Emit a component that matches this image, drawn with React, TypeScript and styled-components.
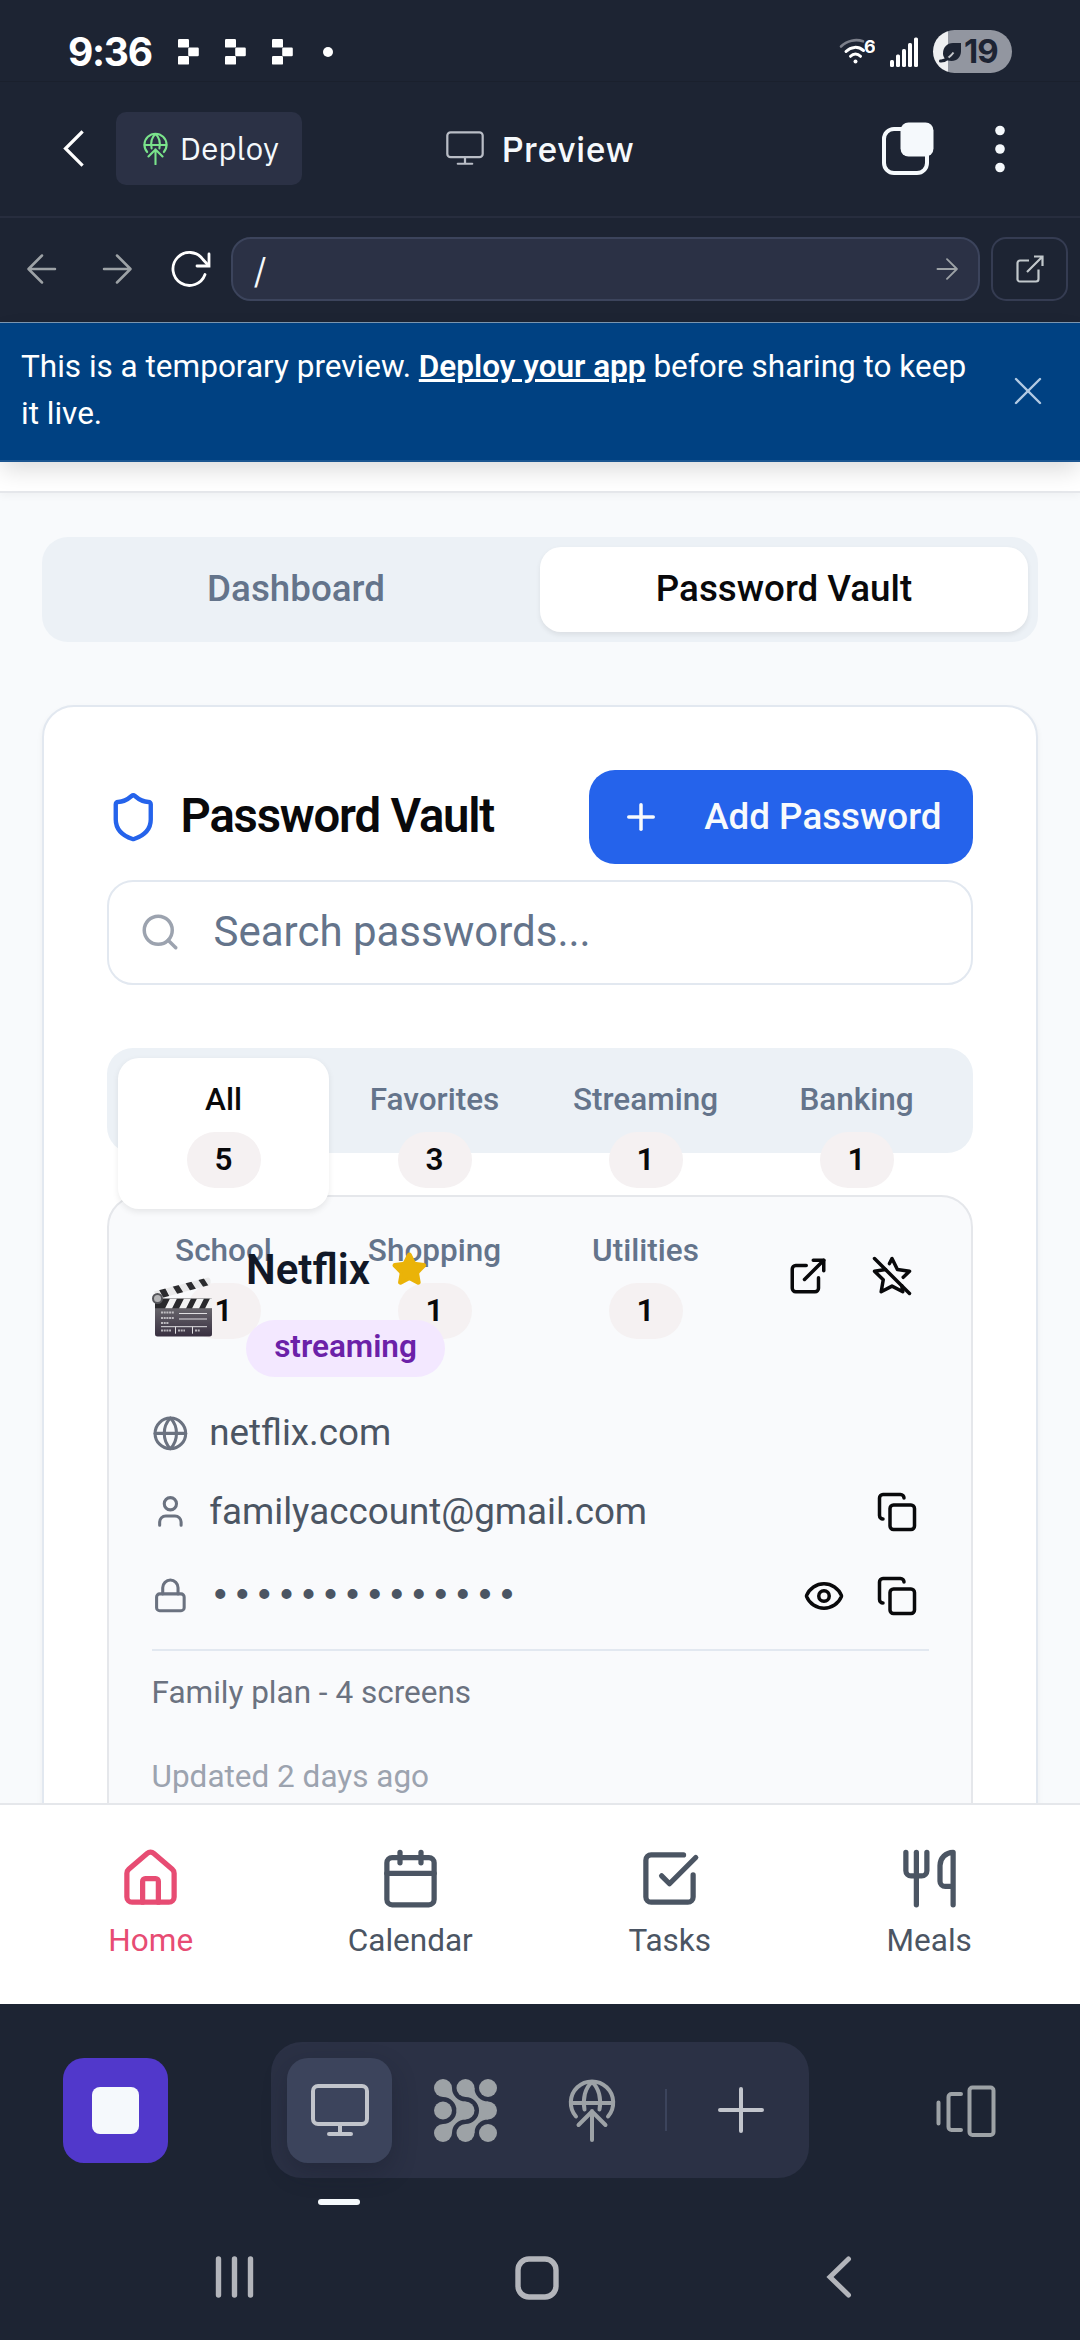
import React from "react";
import styled, { createGlobalStyle } from "styled-components";
import {
  Calendar,
  Copy,
  ExternalLink,
  Eye,
  Globe,
  House,
  Lock,
  Plus,
  Search,
  Shield,
  SquareCheckBig,
  Star,
  StarOff,
  User,
  Utensils,
  X,
} from "lucide-react";

const GlobalStyle = createGlobalStyle`
  *, *::before, *::after { box-sizing: border-box; }
  body { margin: 0; background: #1d2433; }
  svg { display: block; flex: none; }
  button { font: inherit; border: 0; padding: 0; margin: 0; background: none; color: inherit; }
`;

const Screen = styled.div`
  width: 1080px;
  height: 2340px;
  display: flex;
  flex-direction: column;
  overflow: hidden;
  background: #1d2433;
  font-family: Roboto, "Liberation Sans", sans-serif;
`;

/* ---------- system status bar ---------- */

const StatusBar = styled.div`
  height: 82px;
  flex: none;
  display: flex;
  align-items: center;
  justify-content: space-between;
  padding: 22px 68px 0 68px;
  border-bottom: 1px solid #1a202d;
`;

const StatusGroup = styled.div<{ $gap: number }>`
  display: flex;
  align-items: center;
  gap: ${(p) => p.$gap}px;
`;

const Clock = styled.span`
  width: 83px;
  margin-right: 1px;
  color: #fff;
  font: 700 39px/44px Inter, sans-serif;
  letter-spacing: -1.3px;
  white-space: nowrap;
`;

const Battery = styled.div`
  width: 79px;
  height: 43px;
  border-radius: 22px;
  background: linear-gradient(90deg, #eeeff1 0 15px, #9296a0 15px);
  display: flex;
  align-items: center;
  padding-left: 6px;
  color: #1d2433;
  font: 700 33px/43px Inter, sans-serif;
  letter-spacing: -1px;
`;

const BatteryLevel = styled.span`
  margin-left: 2px;
`;

/* ---------- workspace header ---------- */

const Header = styled.header`
  height: 136px;
  flex: none;
  display: grid;
  grid-template-columns: 1fr auto 1fr;
  align-items: center;
  padding: 0 74px 1px 62px;
  border-bottom: 2px solid #272d3e;
  color: #f5f9fc;
`;

const HeaderSide = styled.div<{ $end?: boolean }>`
  display: flex;
  align-items: center;
  justify-content: ${(p) => (p.$end ? "flex-end" : "flex-start")};
  gap: ${(p) => (p.$end ? 60 : 32)}px;
`;

const DeployButton = styled.button`
  height: 73px;
  width: 186px;
  border-radius: 10px;
  background: #2b3145;
  display: flex;
  align-items: center;
  gap: 12px;
  padding-left: 27px;
  color: #f5f9fc;
  font: 400 31px/40px "IBM Plex Sans", Inter, sans-serif;
  letter-spacing: 0.35px;
`;

const HeaderTitle = styled.div`
  display: flex;
  align-items: center;
  gap: 18px;
  transform: translateX(6px);
  font: 500 35px/44px "IBM Plex Sans", Inter, sans-serif;
  letter-spacing: 0.65px;
`;

/* ---------- address row ---------- */

const AddressRow = styled.div`
  height: 105px;
  flex: none;
  display: flex;
  align-items: center;
  padding: 0 12px 3px 27px;
  border-bottom: 1px solid #7d98b3;
`;

const NavButtons = styled.div`
  width: 204px;
  display: flex;
  align-items: center;
  color: #9da2a6;
`;

const NavSlot = styled.div<{ $w: number }>`
  width: ${(p) => p.$w}px;
`;

const AddressField = styled.div`
  width: 749px;
  height: 64px;
  border: 2px solid #3c445c;
  border-radius: 20px;
  background: #2b3145;
  display: flex;
  align-items: center;
  justify-content: space-between;
  padding: 0 20px;
  color: #9da2a6;
  font: 400 34px/60px "IBM Plex Sans", Inter, sans-serif;
`;

const AddressPath = styled.span`
  margin-left: 1px;
  color: #f5f9fc;
`;

const OpenButton = styled.button`
  width: 77px;
  height: 64px;
  margin-left: 11px;
  border: 2px solid #353c52;
  border-radius: 15px;
  display: flex;
  align-items: center;
  justify-content: center;
  color: #c2c8cc;
`;

/* ---------- preview notice ---------- */

const Notice = styled.div`
  position: relative;
  z-index: 3;
  height: 139px;
  flex: none;
  display: flex;
  align-items: center;
  justify-content: space-between;
  padding: 0 28px 2px 21px;
  background: #004182;
  border-bottom: 2px solid #1b5590;
  box-shadow: 0 10px 22px -2px rgba(0, 0, 0, 0.14);
  color: #fff;
`;

const NoticeText = styled.p`
  margin: 0;
  width: 970px;
  font-size: 31.5px;
  line-height: 46.5px;
`;

const NoticeLink = styled.a`
  font-weight: 600;
  text-decoration: underline;
`;

/* ---------- previewed application ---------- */

const AppView = styled.main`
  height: 1341px;
  flex: none;
  overflow: hidden;
  background: #f8fafc;
`;

const AppHeaderEdge = styled.div`
  height: 31px;
  background: #fff;
  border-bottom: 2px solid #e5e7eb;
  box-shadow: 0 3px 8px rgba(0, 0, 0, 0.04);
`;

const Body = styled.div`
  padding: 44px 42px 0;
  display: flex;
  flex-direction: column;
`;

const Segments = styled.div`
  height: 105px;
  padding: 10px;
  border-radius: 26px;
  background: #ecf1f6;
  display: grid;
  grid-template-columns: 1fr 1fr;
`;

const Segment = styled.button<{ $active?: boolean }>`
  border-radius: 21px;
  background: ${(p) => (p.$active ? "#fff" : "transparent")};
  color: ${(p) => (p.$active ? "#09090b" : "#64748b")};
  box-shadow: ${(p) => (p.$active ? "0 2.6px 5px rgba(0,0,0,0.07)" : "none")};
  font-weight: 500;
  font-size: 36.75px;
  line-height: 52.5px;
`;

const Panel = styled.section`
  margin-top: 63px;
  height: 1300px;
  border: 2px solid #e2e8f0;
  border-radius: 32px;
  background: #fff;
  box-shadow: 0 3px 6px rgba(0, 0, 0, 0.05);
  padding: 63px 63px 0;
  display: flex;
  flex-direction: column;
`;

const PanelHeader = styled.div`
  height: 94px;
  flex: none;
  display: flex;
  align-items: center;
  justify-content: space-between;
`;

const PanelTitle = styled.h2`
  margin: 0;
  display: flex;
  align-items: center;
  gap: 21px;
  color: #09090b;
  font-weight: 600;
  font-size: 47.25px;
  line-height: 50px;
  letter-spacing: -1.18px;
`;

const AddButton = styled.button`
  height: 94px;
  padding: 0 31.5px;
  border-radius: 26px;
  background: #2563eb;
  color: #f8fafc;
  display: flex;
  align-items: center;
  gap: 42px;
  font-weight: 500;
  font-size: 36.75px;
`;

const Label = styled.span`
  padding-bottom: 2px;
`;

const SearchField = styled.div`
  height: 105px;
  flex: none;
  margin-top: 16px;
  border: 2px solid #e2e8f0;
  border-radius: 26px;
  background: #fff;
  display: flex;
  align-items: center;
  gap: 32.5px;
  padding: 0 0 2px 30px;
  color: #64748b;
  font-size: 42px;
`;

const Categories = styled.div`
  position: relative;
  z-index: 1;
  height: 105px;
  flex: none;
  margin-top: 63px;
  padding: 10px 11px;
  border-radius: 26px;
  background: #ecf1f6;
  display: grid;
  grid-template-columns: repeat(4, 1fr);
  grid-auto-rows: 151px;
`;

const Category = styled.button<{ $active?: boolean }>`
  display: flex;
  flex-direction: column;
  align-items: center;
  gap: 11px;
  padding-top: 21px;
  border-radius: 21px;
  background: ${(p) => (p.$active ? "#fff" : "transparent")};
  color: ${(p) => (p.$active ? "#09090b" : "#64748b")};
  box-shadow: ${(p) => (p.$active ? "0 2.6px 6px rgba(0,0,0,0.08)" : "none")};
  font-weight: 500;
  font-size: 31.5px;
  line-height: 42px;
`;

const Count = styled.span`
  width: 74px;
  height: 56px;
  border-radius: 28px;
  background: #f5f1f2;
  color: #09090b;
  font-weight: 600;
  line-height: 55px;
`;

const Entry = styled.article`
  height: 700px;
  flex: none;
  margin-top: 42px;
  border: 2px solid #e5e7eb;
  border-radius: 32px;
  background: #f9fafc;
  padding: 42.5px;
`;

const EntryBody = styled.div`
  position: relative;
  z-index: 2;
  display: flex;
  flex-direction: column;
`;

const EntryHead = styled.div`
  height: 137px;
  display: flex;
  align-items: center;
`;

const EntryEmoji = styled.div`
  width: 94.5px;
  height: 62px;
`;

const EntryTitle = styled.div`
  flex: 1;
  height: 137px;
  display: flex;
  flex-direction: column;
  align-items: flex-start;
  justify-content: space-between;
`;

const EntryName = styled.h3`
  margin: 0;
  display: flex;
  align-items: center;
  gap: 21px;
  color: #111827;
  font-weight: 600;
  font-size: 42px;
  line-height: 60px;
`;

const Tag = styled.span`
  height: 57px;
  width: 199px;
  border-radius: 28.5px;
  background: #f3e8ff;
  color: #6b21a8;
  text-align: center;
  font-weight: 600;
  font-size: 31.5px;
  line-height: 54px;
`;

const Actions = styled.div<{ $top?: boolean }>`
  display: flex;
  gap: 10.5px;
  color: #09090b;
  align-self: ${(p) => (p.$top ? "flex-start" : "center")};
`;

const IconButton = styled.button<{ $w: number }>`
  width: ${(p) => p.$w}px;
  height: 73.5px;
  display: flex;
  align-items: center;
  justify-content: center;
`;

const Field = styled.div<{ $h: number; $mt: number }>`
  height: ${(p) => p.$h}px;
  margin-top: ${(p) => p.$mt}px;
  display: flex;
  align-items: center;
  color: #6b7280;
`;

const FieldValue = styled.span<{ $mono?: boolean }>`
  flex: 1;
  margin-left: 21px;
  color: #4b5563;
  font-family: ${(p) => (p.$mono ? '"Liberation Mono", monospace' : "inherit")};
  font-size: 36.75px;
  line-height: 50px;
`;

const Note = styled.p`
  margin: 16.5px 0 0;
  padding-top: 21px;
  border-top: 2px solid #e2e8f0;
  color: #6b7280;
  font-size: 31.5px;
  line-height: 42px;
`;

const Updated = styled.p`
  margin: 42px 0 0;
  color: #9ca3af;
  font-size: 31.5px;
  line-height: 42px;
`;

/* ---------- application tab bar ---------- */

const TabBar = styled.nav`
  height: 201px;
  flex: none;
  padding: 42px 21px 0;
  border-top: 2px solid #e5e7eb;
  background: #fff;
  display: grid;
  grid-template-columns: repeat(4, 1fr);
`;

const TabItem = styled.button<{ $active?: boolean }>`
  display: flex;
  flex-direction: column;
  align-items: center;
  justify-content: flex-start;
  gap: 10px;
  color: ${(p) => (p.$active ? "#e74c73" : "#4b5563")};
  font-size: 31.5px;
  line-height: 42px;
`;

/* ---------- workspace dock ---------- */

const Dock = styled.div`
  height: 195px;
  flex: none;
  display: flex;
  align-items: flex-start;
  padding: 38px 84px 0 63px;
`;

const StopButton = styled.button`
  width: 105px;
  height: 105px;
  margin: 16px 103px 0 0;
  border-radius: 21px;
  background: #5138cb;
  display: flex;
  align-items: center;
  justify-content: center;
`;

const StopMark = styled.span`
  width: 47px;
  height: 47px;
  border-radius: 8px;
  background: #f5f9fc;
`;

const DockColumn = styled.div`
  display: flex;
  flex-direction: column;
`;

const DockGroup = styled.div`
  width: 538px;
  height: 136px;
  border-radius: 31px;
  background: #2b3145;
  display: flex;
  align-items: center;
  padding-left: 16px;
`;

const DockItem = styled.button<{ $active?: boolean; $ml?: number }>`
  width: 105px;
  height: 105px;
  margin-left: ${(p) => p.$ml ?? 0}px;
  border-radius: 21px;
  display: flex;
  align-items: center;
  justify-content: center;
  color: ${(p) => (p.$active ? "#c2c5cc" : "#9da2a6")};
  background: ${(p) => (p.$active ? "#3c445c" : "transparent")};
  box-shadow: ${(p) => (p.$active ? "0 10px 24px rgba(20,24,36,0.3)" : "none")};
`;

const DockDivider = styled.span`
  width: 2px;
  height: 42px;
  margin-left: 21px;
  background: #3c445c;
`;

const Indicator = styled.span`
  width: 42px;
  height: 6px;
  margin: 21px 0 0 47px;
  border-radius: 3px;
  background: #f5f9fc;
`;

const LayoutButton = styled.button`
  margin: 42.5px 0 0 auto;
  color: #9da2a6;
`;

/* ---------- system navigation ---------- */

const SystemNav = styled.div`
  flex: 1;
  display: flex;
  align-items: flex-start;
  justify-content: space-between;
  padding: 57px 228px 0 215px;
  color: #b3b5bb;

  svg:nth-child(2) {
    margin-right: 6px;
  }
`;

/* ---------- drawings ---------- */

const Tiles = () => (
  <svg width="21" height="26" viewBox="0 0 21 26" fill="#fff">
    <rect x="0" y="0" width="11" height="8.6" rx="1.2" />
    <rect x="10.2" y="8.6" width="10.6" height="8.6" rx="1.2" />
    <rect x="0" y="17" width="11" height="8.6" rx="1.2" />
  </svg>
);

const Dot = styled.span`
  width: 10px;
  height: 10px;
  margin-left: 4px;
  border-radius: 50%;
  background: #fff;
`;

const Wifi = () => (
  <svg width="36" height="30" viewBox="0 0 36 30" fill="none" strokeLinecap="round">
    <path d="M2 9.500C8 3.400 17 1.800 24 4.300" stroke="#7b7f8a" strokeWidth="2.600" />
    <path d="M7 14.500c5-5 12-5.600 17.500-1" stroke="#fff" strokeWidth="3" />
    <path d="M11.500 19.300c3-3 7-3 10 0" stroke="#fff" strokeWidth="3" />
    <circle cx="16.500" cy="24.500" r="2" fill="#fff" />
    <text x="25" y="16" fill="#fff" fontFamily="Inter, sans-serif" fontWeight="700" fontSize="18">
      6
    </text>
  </svg>
);

const Signal = () => (
  <svg width="28" height="30" viewBox="0 0 28 30" fill="#fff">
    <rect x="0" y="23" width="4" height="7" rx="1.5" />
    <rect x="6" y="17.500" width="4" height="12.500" rx="1.5" />
    <rect x="12" y="12" width="4" height="18" rx="1.5" />
    <rect x="18" y="6" width="4" height="24" rx="1.5" />
    <rect x="24" y="0.500" width="4" height="29.500" rx="1.5" />
  </svg>
);

const Leaf = () => (
  <svg width="23" height="22" viewBox="0 0 23 22">
    <path d="M22 2v8c0 6-4 10-9.500 10C7 20 4 16.500 4 12.500 4 6.500 8 2 14 2z" fill="#1d2433" />
    <path d="M5 19c4-1.500 7-4 9.500-7.500" stroke="#c5c7cc" strokeWidth="2" fill="none" />
    <path d="M1.500 20c3 .2 5-.8 7-2.500" stroke="#1d2433" strokeWidth="3" strokeLinecap="round" fill="none" />
  </svg>
);

const BackChevron = () => (
  <svg width="22" height="37" viewBox="0 0 22 37" fill="none" stroke="#fff" strokeWidth="3.2" strokeLinecap="square">
    <path d="M19.500 2.500 3.500 18.500l16 16" />
  </svg>
);

const Launch = ({ size, color }: { size: number; color: string }) => (
  <svg
    width={size}
    height={(size * 64) / 48}
    viewBox="0 0 48 64"
    fill="none"
    stroke={color}
    strokeWidth="4"
    strokeLinecap="round"
    strokeLinejoin="round"
  >
    <path d="M8 38.500a21.200 21.200 0 1 1 32 0" />
    <path d="M3 25h42" />
    <path d="M24 4c-7 6-9.500 17-7.500 27.500M24 4c7 6 9.500 17 7.500 27.500" />
    <path d="M24 62V33M10.500 47 24 33.500 37.500 47" />
  </svg>
);

const Monitor = ({ w, stroke }: { w: number; stroke: number }) => (
  <svg
    width={w}
    height={(w * 52) / 58}
    viewBox="0 0 58 52"
    fill="none"
    stroke="currentColor"
    strokeWidth={stroke}
    strokeLinecap="round"
  >
    <rect x="2" y="2" width="54" height="38" rx="5" />
    <path d="M29 40v10M18 50h22" />
  </svg>
);

const TitleGlyph = styled.span`
  color: #b9bdc6;
`;

const Windows = () => (
  <svg width="52" height="54" viewBox="0 0 52 54">
    <rect x="2" y="7" width="43" height="44" rx="10" fill="none" stroke="#f5f9fc" strokeWidth="4" />
    <rect x="18.500" y="0.500" width="33" height="34" rx="8" fill="#f5f9fc" />
  </svg>
);

const Kebab = () => (
  <svg width="12" height="48" viewBox="0 0 12 48" fill="#f5f9fc">
    <circle cx="6" cy="5.500" r="4.800" />
    <circle cx="6" cy="24" r="4.800" />
    <circle cx="6" cy="42.500" r="4.800" />
  </svg>
);

const Arrow = ({ size, flip }: { size: number; flip?: boolean }) => (
  <svg
    width={size}
    height={size}
    viewBox="0 0 30 30"
    fill="none"
    stroke="currentColor"
    strokeWidth="2.500"
    strokeLinecap="round"
    strokeLinejoin="round"
  >
    <path d={flip ? "M28 15H2M15 1.500 1.500 15 15 28.500" : "M2 15h26M15 1.500 28.500 15 15 28.500"} />
  </svg>
);

const Reload = () => (
  <svg width="40" height="38" viewBox="0 0 40 38" fill="none" stroke="#fff" strokeWidth="2.800" strokeLinecap="round">
    <path d="M34 24.500A16.500 16.500 0 1 1 32 9.500L37.500 15.500" />
    <path d="M38 4v12H26" />
  </svg>
);

const Share = () => (
  <svg width="28" height="28" viewBox="0 0 28 28" fill="none" stroke="currentColor" strokeWidth="2.200">
    <path d="M13 5.500H4a2.500 2.500 0 0 0-2.500 2.500v15.500A2.500 2.500 0 0 0 4 26.500h16a2.500 2.500 0 0 0 2.500-2.500V14.500" />
    <path d="M18 1.500h8.500V11M26.500 1.500 11 17" />
  </svg>
);

const Agent = () => (
  <svg width="63" height="63" viewBox="0 0 63 63" fill="currentColor">
    {[9, 31.5, 54].map((x) => [9, 31.5, 54].map((y) => <circle key={`${x}-${y}`} cx={x} cy={y} r="9" />))}
    {[0, 22.5].map((dx) => (
      <g key={dx} transform={`translate(${dx} 0)`}>
        <path d="M18 9A13.500 13.500 0 0 0 31.500 22.500V31.500H22.500A13.500 13.500 0 0 0 9 18V9z" />
        <path d="M18 54A13.500 13.500 0 0 1 31.500 40.500V31.500H22.500A13.500 13.500 0 0 1 9 45V54z" />
      </g>
    ))}
  </svg>
);

const BigPlus = () => (
  <svg width="46" height="46" viewBox="0 0 46 46" stroke="#c2c5cc" strokeWidth="4" strokeLinecap="round">
    <path d="M23 2v42M2 23h42" />
  </svg>
);

const Panes = () => (
  <svg width="60" height="52" viewBox="0 0 60 52" fill="none" stroke="currentColor" strokeWidth="4" strokeLinecap="round">
    <path d="M2.500 17.500v21M25 9H15.500a3 3 0 0 0-3 3v30a3 3 0 0 0 3 3H25" />
    <rect x="33.500" y="2.500" width="24" height="47.500" rx="3" />
  </svg>
);

const Clapper = () => (
  <svg width="61" height="60" viewBox="0 0 61 60">
    <defs>
      <linearGradient id="slate" x1="0" y1="0" x2="0" y2="1">
        <stop offset="0" stopColor="#77777a" />
        <stop offset="1" stopColor="#382f40" />
      </linearGradient>
      <clipPath id="arm">
        <path d="M2 14.500 56 0.500q2 0 2.500 3t-1 4.500L6 22z" />
      </clipPath>
      <clipPath id="bar">
        <rect x="3" y="21.500" width="57" height="10" />
      </clipPath>
    </defs>
    <rect x="3" y="21.500" width="57" height="38" rx="2.500" fill="url(#slate)" />
    <g clipPath="url(#bar)">
      <rect x="3" y="21.500" width="57" height="10" fill="#29292c" />
      <path d="M18 21.500h7l-5 10h-7zM32 21.500h7l-5 10h-7zM45 21.500h7l-5 10h-7zM58 21.500h7l-5 10h-7z" fill="#f2f2f2" />
    </g>
    <g clipPath="url(#arm)">
      <path d="M0 0h61v24H0z" fill="#e9e9ea" />
      <path
        d="m5 9 7 13 6-1.500L11 7zM18 5l8 13 6-1.500L24 4zM31 2l8 13 6-1.500L37 1zM43-2l9 13 5-1.500L49-3z"
        fill="#2b2b2e"
      />
    </g>
    <circle cx="5.500" cy="21.500" r="4.500" fill="#b5b5b7" stroke="#55555a" strokeWidth="2" />
    <g stroke="#e0dfe2" strokeWidth="1" fill="none">
      <path d="M27 36.500h28M27 42h28" />
      <path d="M9 49.700h46M23.500 49.700v7M40.500 49.700v7" />
      <path d="M9 35.500h13M9 41h13M9 46h8M9 53.500h10M26 53.500h7M43 53.500h5" strokeWidth="2" strokeDasharray="2 .7" opacity=".75" />
    </g>
  </svg>
);

const Recents = () => (
  <svg width="39" height="42" viewBox="0 0 39 42" stroke="currentColor" strokeWidth="5.400" strokeLinecap="round">
    <path d="M3.500 3v36M19.500 3v36M35.500 3v36" />
  </svg>
);

const HomeKey = () => (
  <svg width="44" height="44" viewBox="0 0 44 44" fill="none" stroke="currentColor" strokeWidth="5.400">
    <rect x="3" y="3" width="38" height="38" rx="11" />
  </svg>
);

const BackKey = () => (
  <svg
    width="26"
    height="42"
    viewBox="0 0 26 42"
    fill="none"
    stroke="currentColor"
    strokeWidth="5"
    strokeLinecap="round"
  >
    <path d="M22.500 3 4 21l18.500 18" />
  </svg>
);

const categories = [
  { name: "All", count: 5, active: true },
  { name: "Favorites", count: 3 },
  { name: "Streaming", count: 1 },
  { name: "Banking", count: 1 },
  { name: "School", count: 1 },
  { name: "Shopping", count: 1 },
  { name: "Utilities", count: 1 },
];

const tabs = [
  { name: "Home", Icon: House, active: true },
  { name: "Calendar", Icon: Calendar },
  { name: "Tasks", Icon: SquareCheckBig },
  { name: "Meals", Icon: Utensils },
];

export default function App() {
  return (
    <Screen>
      <GlobalStyle />
      <StatusBar>
        <StatusGroup $gap={26}>
          <Clock>9:36</Clock>
          <Tiles />
          <Tiles />
          <Tiles />
          <Dot />
        </StatusGroup>
        <StatusGroup $gap={15}>
          <Wifi />
          <Signal />
          <Battery>
            <Leaf />
            <BatteryLevel>19</BatteryLevel>
          </Battery>
        </StatusGroup>
      </StatusBar>

      <Header>
        <HeaderSide>
          <BackChevron />
          <DeployButton>
            <Launch size={25} color="#7ae38b" />
            Deploy
          </DeployButton>
        </HeaderSide>
        <HeaderTitle>
          <TitleGlyph>
            <Monitor w={38} stroke={3.4} />
          </TitleGlyph>
          Preview
        </HeaderTitle>
        <HeaderSide $end>
          <Windows />
          <Kebab />
        </HeaderSide>
      </Header>

      <AddressRow>
        <NavButtons>
          <NavSlot $w={75}>
            <Arrow size={30} flip />
          </NavSlot>
          <NavSlot $w={69}>
            <Arrow size={30} />
          </NavSlot>
          <Reload />
        </NavButtons>
        <AddressField>
          <AddressPath>/</AddressPath>
          <Arrow size={22} />
        </AddressField>
        <OpenButton>
          <Share />
        </OpenButton>
      </AddressRow>

      <Notice>
        <NoticeText>
          This is a temporary preview. <NoticeLink>Deploy your app</NoticeLink> before sharing to keep it live.
        </NoticeText>
        <X size={48} strokeWidth={1.2} color="#b2cae3" />
      </Notice>

      <AppView>
        <AppHeaderEdge />
        <Body>
          <Segments>
            <Segment>Dashboard</Segment>
            <Segment $active>Password Vault</Segment>
          </Segments>

          <Panel>
            <PanelHeader>
              <PanelTitle>
                <Shield size={52.5} color="#2563eb" />
                <Label>Password Vault</Label>
              </PanelTitle>
              <AddButton>
                <Plus size={42} />
                <Label>Add Password</Label>
              </AddButton>
            </PanelHeader>

            <SearchField>
              <Search size={42} color="#9ca3af" />
              Search passwords...
            </SearchField>

            <Categories>
              {categories.map((c) => (
                <Category key={c.name} $active={c.active}>
                  {c.name}
                  <Count>{c.count}</Count>
                </Category>
              ))}
            </Categories>

            <Entry>
              <EntryBody>
                <EntryHead>
                  <EntryEmoji>
                    <Clapper />
                  </EntryEmoji>
                  <EntryTitle>
                    <EntryName>
                      Netflix
                      <Star size={36.75} color="#eab308" fill="#eab308" />
                    </EntryName>
                    <Tag>streaming</Tag>
                  </EntryTitle>
                  <Actions $top>
                    <IconButton $w={73.5}>
                      <ExternalLink size={42} />
                    </IconButton>
                    <IconButton $w={73.5}>
                      <StarOff size={42} />
                    </IconButton>
                  </Actions>
                </EntryHead>

                <Field $h={63} $mt={25}>
                  <Globe size={36.75} />
                  <FieldValue>netflix.com</FieldValue>
                </Field>
                <Field $h={73.5} $mt={10.5}>
                  <User size={36.75} />
                  <FieldValue>familyaccount@gmail.com</FieldValue>
                  <Actions>
                    <IconButton $w={63}>
                      <Copy size={42} />
                    </IconButton>
                  </Actions>
                </Field>
                <Field $h={73.5} $mt={10.5}>
                  <Lock size={36.75} />
                  <FieldValue $mono>••••••••••••••</FieldValue>
                  <Actions>
                    <IconButton $w={63}>
                      <Eye size={42} />
                    </IconButton>
                    <IconButton $w={63}>
                      <Copy size={42} />
                    </IconButton>
                  </Actions>
                </Field>

                <Note>Family plan - 4 screens</Note>
                <Updated>Updated 2 days ago</Updated>
              </EntryBody>
            </Entry>
          </Panel>
        </Body>
      </AppView>

      <TabBar>
        {tabs.map(({ name, Icon, active }) => (
          <TabItem key={name} $active={active}>
            <Icon size={63} />
            {name}
          </TabItem>
        ))}
      </TabBar>

      <Dock>
        <StopButton>
          <StopMark />
        </StopButton>
        <DockColumn>
          <DockGroup>
            <DockItem $active>
              <Monitor w={58} stroke={4} />
            </DockItem>
            <DockItem $ml={21}>
              <Agent />
            </DockItem>
            <DockItem $ml={21}>
              <Launch size={48} color="#9da2a6" />
            </DockItem>
            <DockDivider />
            <DockItem $ml={21}>
              <BigPlus />
            </DockItem>
          </DockGroup>
          <Indicator />
        </DockColumn>
        <LayoutButton>
          <Panes />
        </LayoutButton>
      </Dock>

      <SystemNav>
        <Recents />
        <HomeKey />
        <BackKey />
      </SystemNav>
    </Screen>
  );
}
